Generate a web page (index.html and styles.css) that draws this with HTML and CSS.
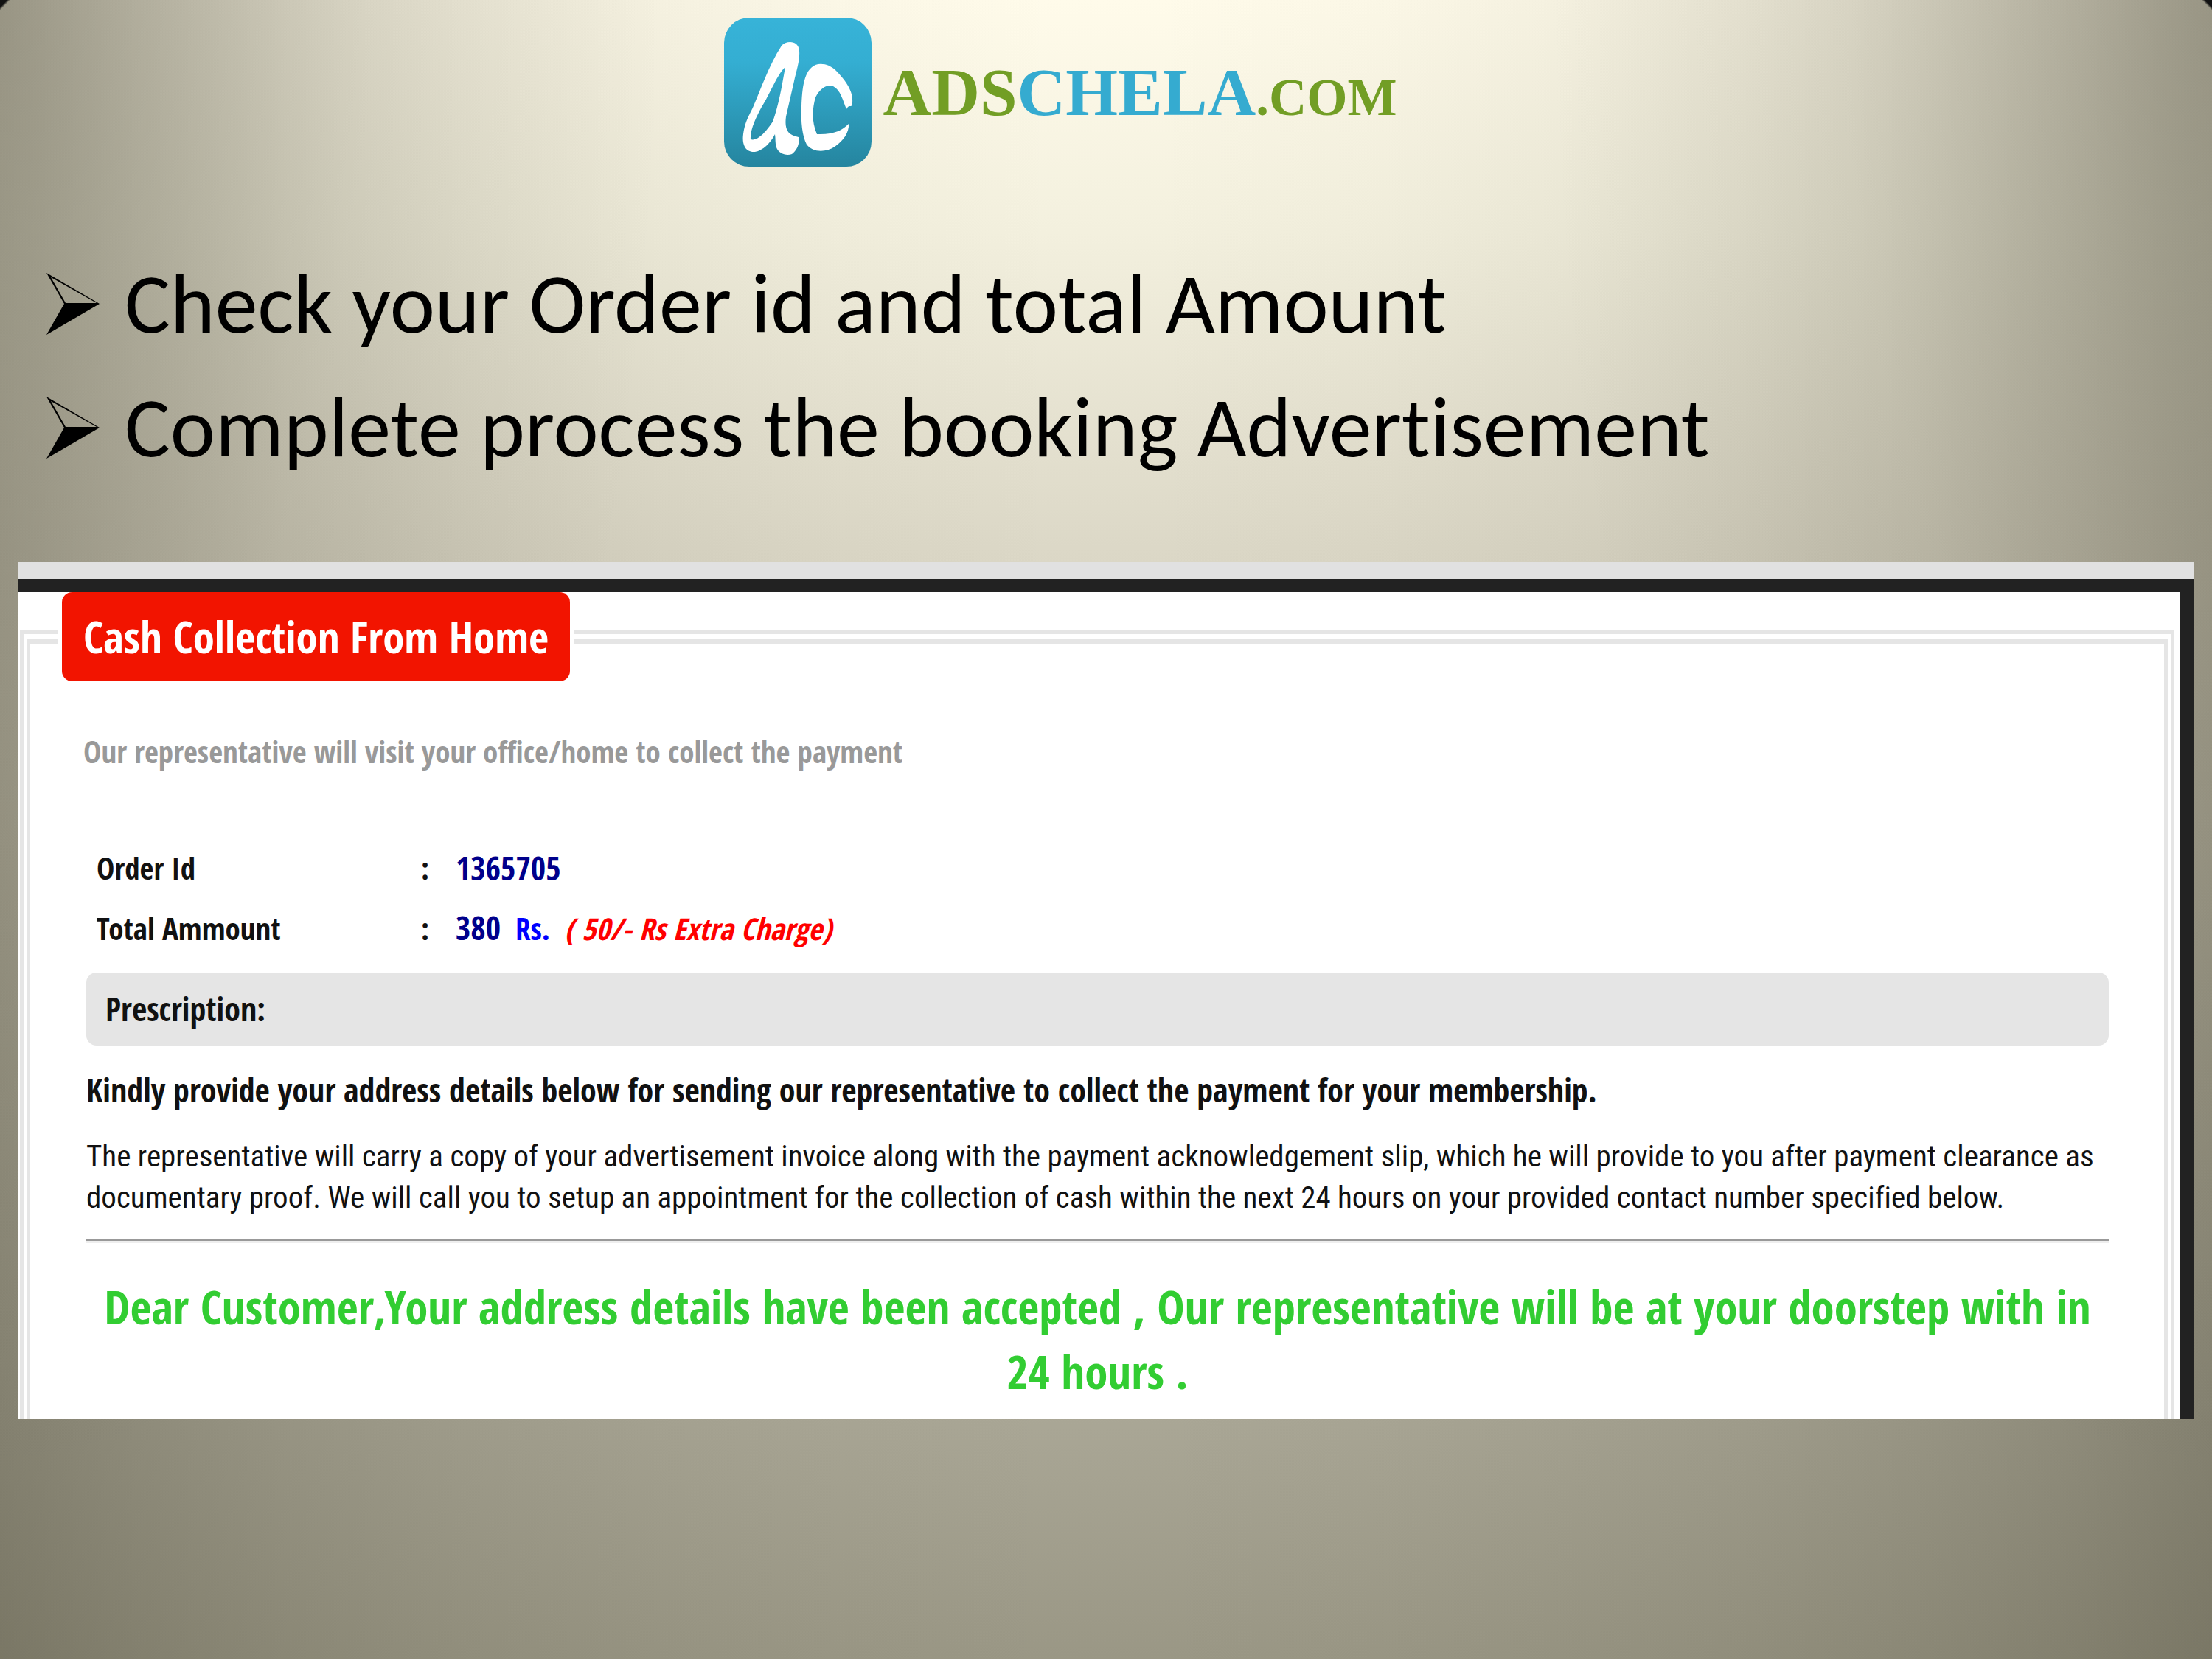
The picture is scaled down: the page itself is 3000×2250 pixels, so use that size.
FILE: index.html
```html
<!DOCTYPE html>
<html lang="en">
<head>
<meta charset="utf-8">
<title>AdsChela.com - Cash Collection From Home</title>
<link rel="stylesheet" href="styles.css">
</head>
<body>
<header class="brand">
  <svg class="brand-mark" viewBox="0 0 200 202" aria-hidden="true">
    <defs>
      <linearGradient id="tile" x1="0" y1="0" x2="0" y2="1">
        <stop offset="0" stop-color="#37b3d8"/>
        <stop offset="0.3" stop-color="#34aed2"/>
        <stop offset="1" stop-color="#25859f"/>
      </linearGradient>
    </defs>
    <rect width="200" height="202" rx="34" fill="url(#tile)"/>
    <path fill="#fff" fill-rule="evenodd" d="M78 38C84 31 101 30 102 45C103 58 98 72 95 86L84 134C82 150 85 159 101 162C103 170 99 180 92 185C84 188 74 184 71 176C69 170 70 164 69 158C63 170 53 180 42 182C29 183 24 172 26 158C28 142 34 132 39 122C50 97 60 66 78 38ZM83 67C73 75 62 104 51 121C44 134 35 152 36 165C46 168 57 154 66 141C74 119 78 95 83 67Z"/>
    <path fill="#fff" d="M166 124C170 116 173 124 174 116C176 100 164 84 152 72C144 64 133 61 124 64C108 71 106 96 105 120C104 142 106 160 112 172C120 183 138 183 150 175C162 167 170 155 169 144C160 153 148 159 126 158C118 140 120 122 124 108C130 96 139 90 148 93C158 98 161 112 166 124Z"/>
  </svg>
  <div class="brand-name"><span class="green">ADS</span><span class="blue">CHELA</span><span class="green small">.COM</span></div>
</header>

<ul class="points">
  <li><svg class="arrow" viewBox="0 0 72 84" aria-hidden="true"><path fill="#000" fill-rule="evenodd" d="M0 0L72 42L0 84L24 42ZM6 6L26 41H68Z"/></svg>Check your Order id and total Amount</li>
  <li><svg class="arrow" viewBox="0 0 72 84" aria-hidden="true"><path fill="#000" fill-rule="evenodd" d="M0 0L72 42L0 84L24 42ZM6 6L26 41H68Z"/></svg>Complete process the booking Advertisement</li>
</ul>

<main class="window">
  <div class="page">
    <fieldset class="frame">
      <legend><span class="title">Cash Collection From Home</span></legend>
      <p class="intro">Our representative will visit your office/home to collect the payment</p>
      <table class="order">
        <tr><th scope="row">Order Id</th><td class="colon">:</td><td class="value">1365705</td></tr>
        <tr><th scope="row">Total Ammount</th><td class="colon">:</td><td class="value">380 <span class="unit">Rs.</span> <em>( 50/- Rs Extra Charge)</em></td></tr>
      </table>
      <h2 class="bar">Prescription:</h2>
      <p class="lead">Kindly provide your address details below for sending our representative to collect the payment for your membership.</p>
      <p class="copy">The representative will carry a copy of your advertisement invoice along with the payment acknowledgement slip, which he will provide to you after payment clearance as documentary proof. We will call you to setup an appointment for the collection of cash within the next 24 hours on your provided contact number specified below.</p>
      <hr>
      <p class="notice">Dear Customer,Your address details have been accepted , Our representative will be at your doorstep with in 24 hours .</p>
    </fieldset>
  </div>
</main>
</body>
</html>
```
FILE: styles.css
```css
* { box-sizing: border-box; }

body {
  margin: 0;
  min-height: 100vh;
  padding: 24px 25px 0;
  font-family: "Open Sans Condensed", "Roboto Condensed", Carlito, sans-serif;
  font-variant-ligatures: none;
  color: #111;
  background:
    linear-gradient(135deg, #111 7px, transparent 10px),
    linear-gradient(225deg, #111 7px, transparent 10px),
    radial-gradient(ellipse 30% 90% at 0 0, rgba(60, 57, 40, 0.28), rgba(60, 57, 40, 0.07) 55%, transparent),
    radial-gradient(ellipse 30% 90% at 100% 0, rgba(60, 57, 40, 0.28), rgba(60, 57, 40, 0.07) 55%, transparent),
    linear-gradient(90deg, rgba(60, 57, 40, 0.34), rgba(60, 57, 40, 0.25) 6%, rgba(60, 57, 40, 0.17) 13%, rgba(60, 57, 40, 0.1) 21%, rgba(60, 57, 40, 0.05) 30%, rgba(60, 57, 40, 0.02) 38%, transparent 48%, transparent 52%, rgba(60, 57, 40, 0.02) 62%, rgba(60, 57, 40, 0.05) 70%, rgba(60, 57, 40, 0.1) 79%, rgba(60, 57, 40, 0.17) 87%, rgba(60, 57, 40, 0.25) 94%, rgba(60, 57, 40, 0.34)),
    linear-gradient(#fffbea, #f3f0de 14%, #dcd8c7 33%, #a9a695 86%, #9a9785);
}

p, h2, ul { margin: 0; padding: 0; }

.brand {
  display: flex;
  justify-content: center;
  gap: 16px;
  padding-right: 124px;
}
.brand-mark { width: 200px; height: 202px; }
.brand-name {
  padding-top: 52px;
  font: bold 91px/100px "Liberation Serif", serif;
}
.green { color: #729e25; }
.blue { color: #35abd0; }
.small { font-size: 71px; }

.points {
  list-style: none;
  padding: 102px 0 98px 38px;
  font: 116px/168px Carlito, Lato, sans-serif;
  font-variant-ligatures: none;
  color: #000;
}
.points li { display: flex; align-items: center; gap: 34px; }
.arrow { width: 72px; height: 84px; }

.window {
  border-top: 23px solid #e1e1e1;
  background: #222;
}
.page {
  margin: 18px 18px 0 0;
  padding: 0 8px 0 2px;
  background: #fff;
}
.frame {
  margin: 0;
  min-width: 0;
  border: 14px double #e5e5e5;
  border-bottom: 0;
  border-top-width: 19px;
  padding: 71px 75px 21px 76px;
}
legend { margin-left: -38px; padding: 0 5px; }
.title {
  display: block;
  padding: 0 29px;
  border-radius: 14px;
  background: #f21400;
  color: #fff;
  font-weight: bold;
  font-size: 59px;
  line-height: 121px;
}
.intro {
  margin-left: -4px;
  font-size: 41px;
  line-height: 48px;
  font-weight: bold;
  color: #999;
}
.order {
  margin: 94px 0 19px 14px;
  border-collapse: collapse;
  font-size: 41px;
  line-height: 81px;
  font-weight: bold;
}
.order th { width: 440px; padding: 0; text-align: left; }
.order td { padding: 0; }
.order .colon { width: 47px; }
.order .value { color: #00008b; white-space: pre; font-size: 44px; }
.unit { padding: 0 9px; color: #00f; font-size: 41px; }
.value em { color: #f00; font-size: 41px; }
.bar {
  padding: 0 26px;
  border-radius: 14px;
  background: #e5e5e5;
  font-size: 44px;
  line-height: 99px;
}
.lead {
  margin-top: 28px;
  font-size: 44px;
  line-height: 64px;
  font-weight: bold;
}
.copy {
  margin-top: 30px;
  font-family: "Roboto Condensed", Carlito, sans-serif;
  font-size: 41px;
  line-height: 56px;
}
hr {
  margin: 28px 0 42px;
  border: 0;
  border-top: 3px solid #999;
  border-bottom: 3px solid #eee;
}
.notice {
  color: #32cd32;
  font-size: 63px;
  line-height: 88px;
  font-weight: bold;
  text-align: center;
}
```
